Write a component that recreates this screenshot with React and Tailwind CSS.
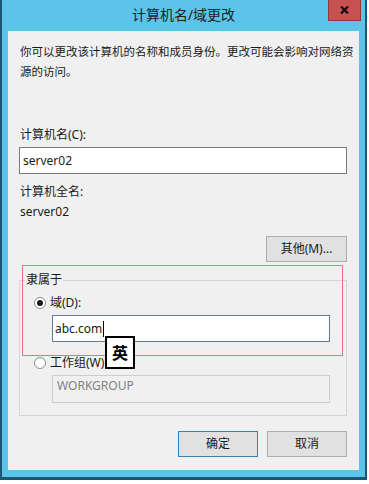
import React from "react";

const FONT = { fontFamily: '"Noto Sans", "Noto Sans CJK SC", sans-serif' };

const Radio = ({ checked, label }) => (
  <div className="flex items-center h-5 ml-[14px] gap-[4px]">
    <div className="w-[12px] h-[12px] rounded-full border border-[#8c8c8c] bg-white flex items-center justify-center">
      {checked && <div className="w-[6px] h-[6px] rounded-full bg-[#1a1a1a]" />}
    </div>
    <span className="text-[12px] leading-5 text-[#1a1a1a]">{label}</span>
  </div>
);

const Button = ({ children, primary, className = "" }) => (
  <button
    className={`shrink-0 h-[26px] bg-[#e1e1e1] border text-[12px] text-[#1a1a1a] flex items-center justify-center ${
      primary ? "border-[#3c7fb1]" : "border-[#adadad]"
    } ${className}`}
  >
    {children}
  </button>
);

const App = () => {
  return (
    <div className="w-[369px] h-[484px] bg-white" style={FONT}>
      <div className="w-[367px] h-[480px] bg-[#5cc3e9] border-l-2 border-r-2 border-b-[3px] border-[#1e5672] px-[6px] pb-[7px] flex flex-col">
        {/* title bar */}
        <div className="relative h-[31px] shrink-0 flex items-center justify-center">
          <span className="text-[14px] text-[#222] leading-none -mt-[1px]">计算机名/域更改</span>
          <div className="absolute top-0 -right-[2px] w-[33px] h-[21px] bg-[#c75050] border border-[#8e3b3b] border-t-0 flex items-center justify-center">
            <svg width="9" height="8" viewBox="0 0 9 8">
              <path d="M1 0.5 L8 7.5 M8 0.5 L1 7.5" stroke="#111" strokeWidth="2.3" />
            </svg>
          </div>
        </div>

        {/* client area */}
        <div className="relative h-[439px] shrink-0 bg-[#f0f0f0] pl-[11px] pr-[12px] pt-[11px] flex flex-col text-[#1a1a1a]">
          <p className="shrink-0 pl-px text-[11.5px] leading-5 whitespace-nowrap">
            你可以更改该计算机的名称和成员身份。更改可能会影响对网络资
            <br />
            源的访问。
          </p>

          <label className="shrink-0 mt-[43px] pl-px text-[12px] leading-5">计算机名(C):</label>
          <div className="shrink-0 mt-[2px] h-[27px] border border-[#7a7a7a] bg-white flex items-center pl-[3px] text-[12px]">
            server02
          </div>

          <div className="shrink-0 mt-[8px] pl-px text-[12px] leading-5">计算机全名:</div>
          <div className="shrink-0 pl-px text-[12px] leading-5">server02</div>

          <div className="shrink-0 mt-[14px] flex justify-end">
            <Button className="w-[81px]">其他(M)...</Button>
          </div>

          <fieldset className="shrink-0 mt-[8px] border border-[#d6d6d6] pb-[12px]">
            <legend className="ml-[5px] px-px text-[12px] leading-5">隶属于</legend>
            <div className="mt-[3px]">
              <Radio checked label="域(D):" />
            </div>
            <div className="mt-[2px] ml-[32px] w-[278px] h-[27px] border border-[#5a7d9c] bg-white flex items-center pl-[2px] text-[12px]">
              abc.com
              <span className="inline-block w-px h-[16px] bg-black ml-px" />
            </div>
            <div className="mt-[11px]">
              <Radio label="工作组(W)" />
            </div>
            <div className="mt-[2px] ml-[32px] w-[278px] h-[28px] border border-[#cccccc] bg-[#f0f0f0] flex items-center pl-[4px] pb-[6px] text-[12px] text-[#838383]">
              WORKGROUP
            </div>
          </fieldset>

          <div className="shrink-0 mt-[15px] flex justify-end gap-[9px]">
            <Button primary className="w-[80px]">确定</Button>
            <Button className="w-[80px]">取消</Button>
          </div>

          {/* red annotation frame */}
          <div className="absolute left-[14px] top-[234px] w-[321px] h-[91px] border border-[#e07585] pointer-events-none" />

          {/* IME indicator */}
          <div className="absolute left-[97px] top-[305px] w-[30px] h-[33px] border-2 border-black bg-white flex items-center justify-center text-[16px] font-bold text-black">
            英
          </div>
        </div>
      </div>
    </div>
  );
};

export default App;
